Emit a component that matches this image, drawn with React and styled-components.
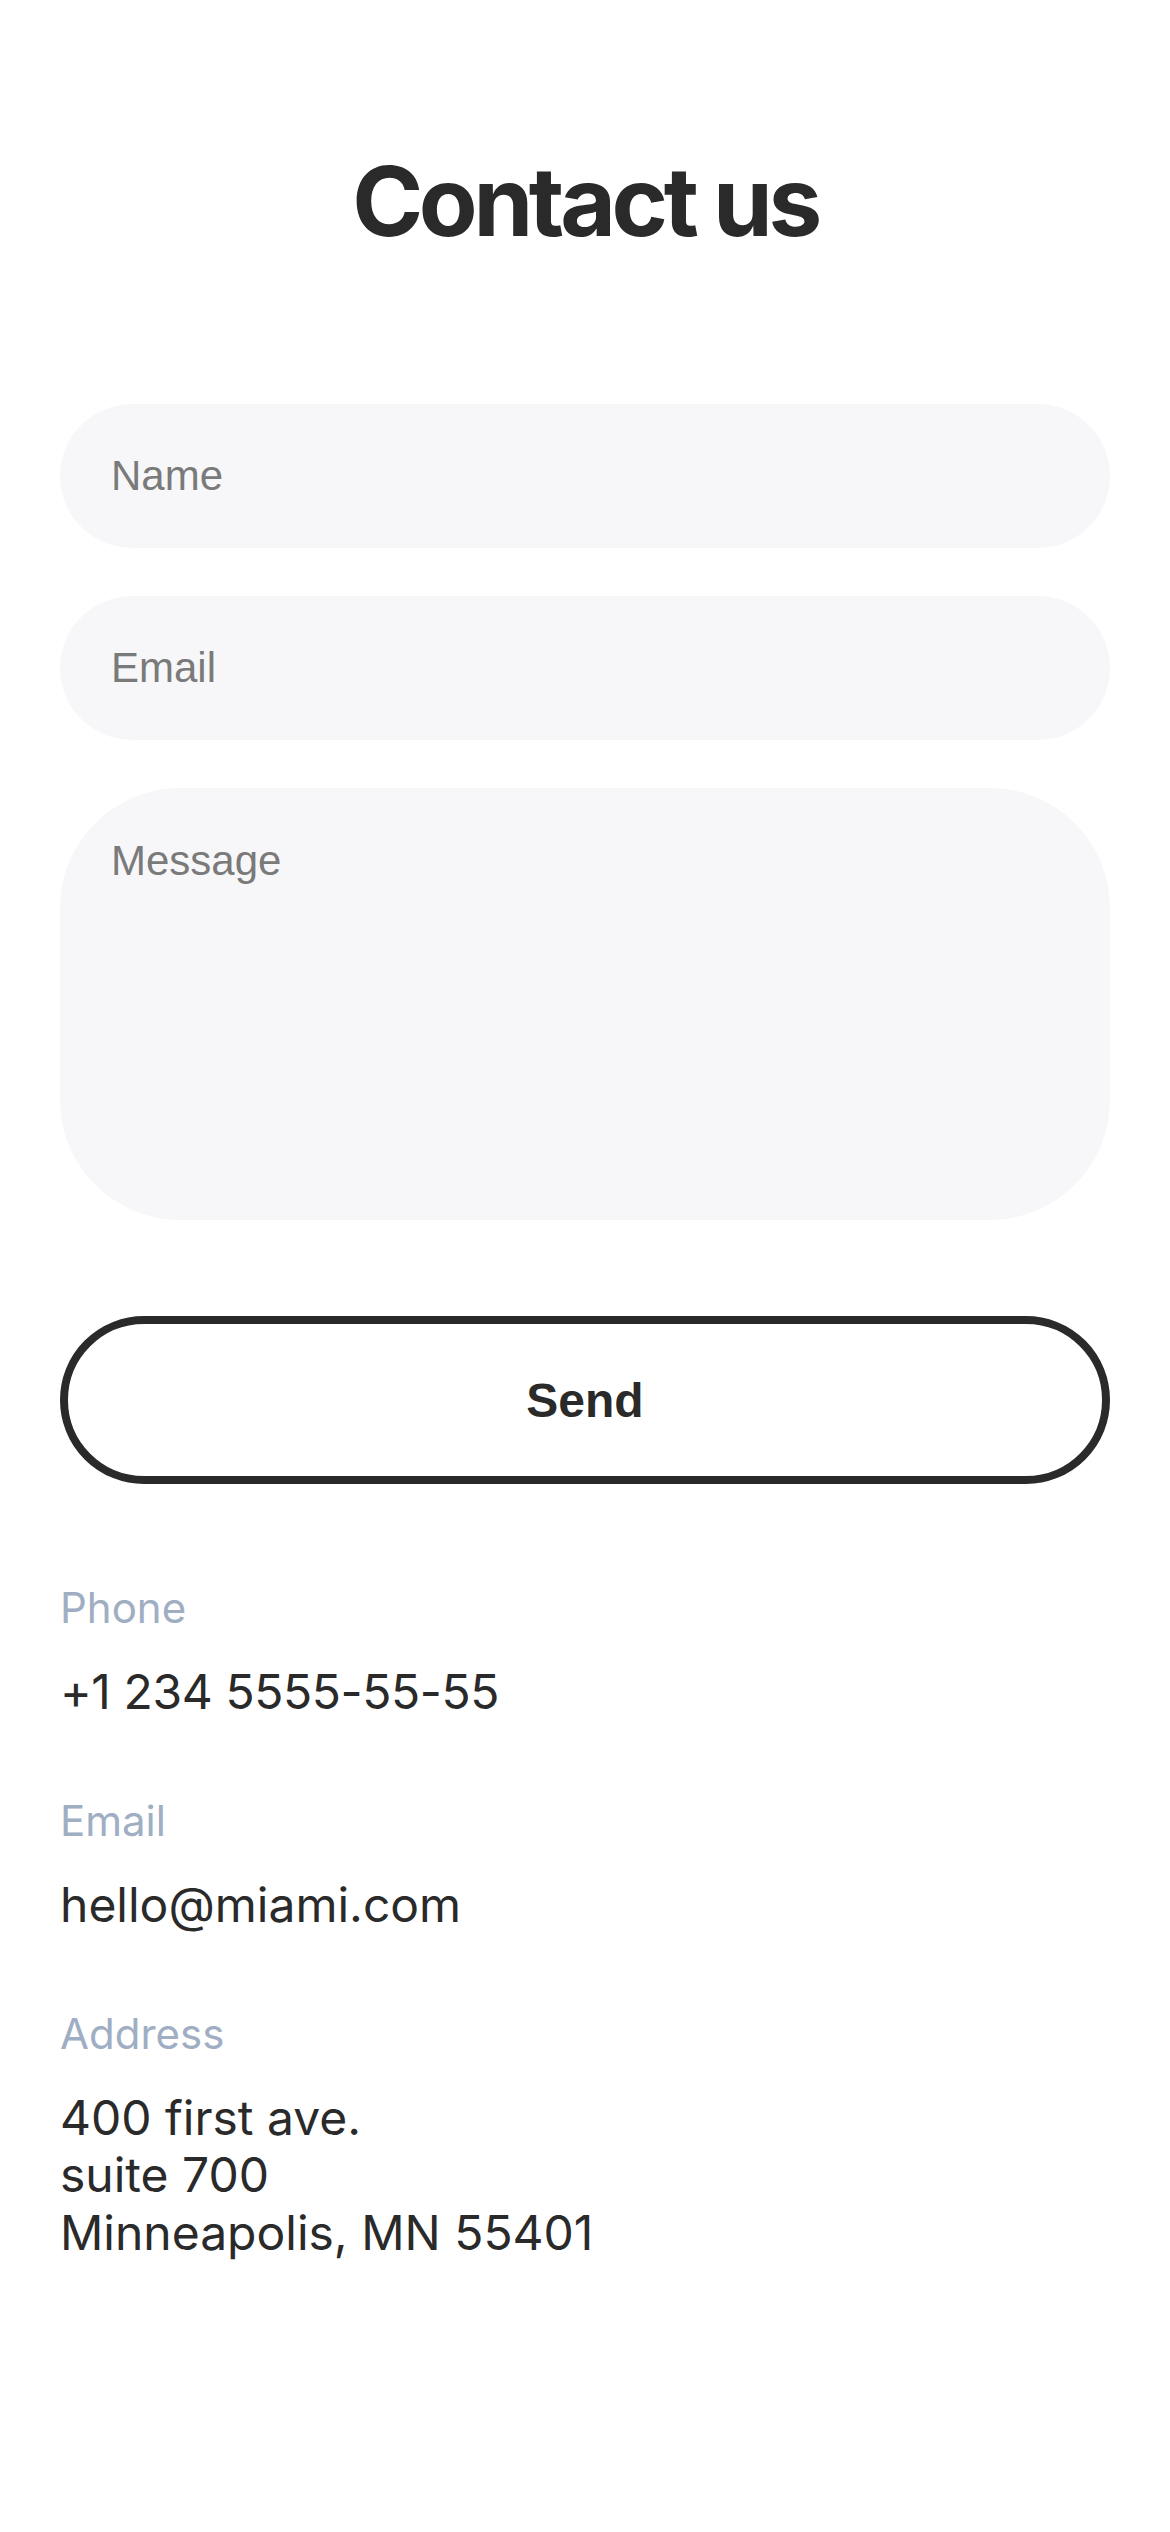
import React from 'react'
import styled, { createGlobalStyle } from 'styled-components'

const GlobalStyle = createGlobalStyle`
  html, body {
    margin: 0;
    padding: 0;
    background: #ffffff;
  }
  * {
    box-sizing: border-box;
  }
`

const Page = styled.div`
  width: 1170px;
  min-height: 2532px;
  padding: 144px 60px 0;
  display: flex;
  flex-direction: column;
  font-family: Inter, "Noto Sans", sans-serif;
  color: #2a2a2a;
`

const Title = styled.h1`
  margin: 0 0 145px;
  font-size: 96px;
  line-height: 1.2;
  font-weight: 700;
  letter-spacing: -0.045em;
  text-align: center;
  color: #2a2a2a;
`

const Form = styled.form`
  display: flex;
  flex-direction: column;
  gap: 48px;
`

const Field = styled.input`
  display: block;
  width: 100%;
  height: 144px;
  padding: 0 48px 0 51px;
  border: none;
  outline: none;
  border-radius: 72px;
  background: #f7f7f9;
  font-family: "Liberation Sans", Arial, sans-serif;
  font-size: 42px;
  color: #2a2a2a;

  &::placeholder {
    color: #7a7a7a;
  }
`

const MessageBox = styled.textarea`
  display: block;
  width: 100%;
  height: 432px;
  padding: 49px 48px 48px 51px;
  border: none;
  outline: none;
  resize: none;
  border-radius: 120px;
  background: #f7f7f9;
  font-family: "Liberation Sans", Arial, sans-serif;
  font-size: 42px;
  color: #2a2a2a;

  &::placeholder {
    color: #7a7a7a;
  }
`

const SendButton = styled.button`
  display: block;
  width: 100%;
  height: 168px;
  margin-top: 48px;
  border: 8px solid #2a2a2a;
  border-radius: 84px;
  background: #ffffff;
  font-family: "Liberation Sans", Arial, sans-serif;
  font-weight: 700;
  font-size: 48px;
  color: #2a2a2a;
  cursor: pointer;
`

const Details = styled.div`
  display: flex;
  flex-direction: column;
  gap: 76px;
  margin-top: 99px;
`

const Item = styled.div`
  display: flex;
  flex-direction: column;
  gap: 29px;
`

const Label = styled.span`
  font-size: 42px;
  line-height: 1.2;
  color: #a0aec3;
`

const Value = styled.div`
  font-size: 48px;
  line-height: 1.2;
  color: #2a2a2a;
  letter-spacing: ${p => (p.$tight ? '-0.4px' : 'normal')};
`

const details = [
  { label: 'Phone', lines: ['+1 234 5555-55-55'], tight: true },
  { label: 'Email', lines: ['hello@miami.com'] },
  { label: 'Address', lines: ['400 first ave.', 'suite 700', 'Minneapolis, MN 55401'] },
]

export default function App() {
  return (
    <Page>
      <GlobalStyle />
      <Title>Contact us</Title>
      <Form onSubmit={e => e.preventDefault()}>
        <Field type="text" placeholder="Name" />
        <Field type="email" placeholder="Email" />
        <MessageBox placeholder="Message" />
        <SendButton type="submit">Send</SendButton>
      </Form>
      <Details>
        {details.map(d => (
          <Item key={d.label}>
            <Label>{d.label}</Label>
            <Value $tight={d.tight}>
              {d.lines.map(l => (
                <div key={l}>{l}</div>
              ))}
            </Value>
          </Item>
        ))}
      </Details>
    </Page>
  )
}
